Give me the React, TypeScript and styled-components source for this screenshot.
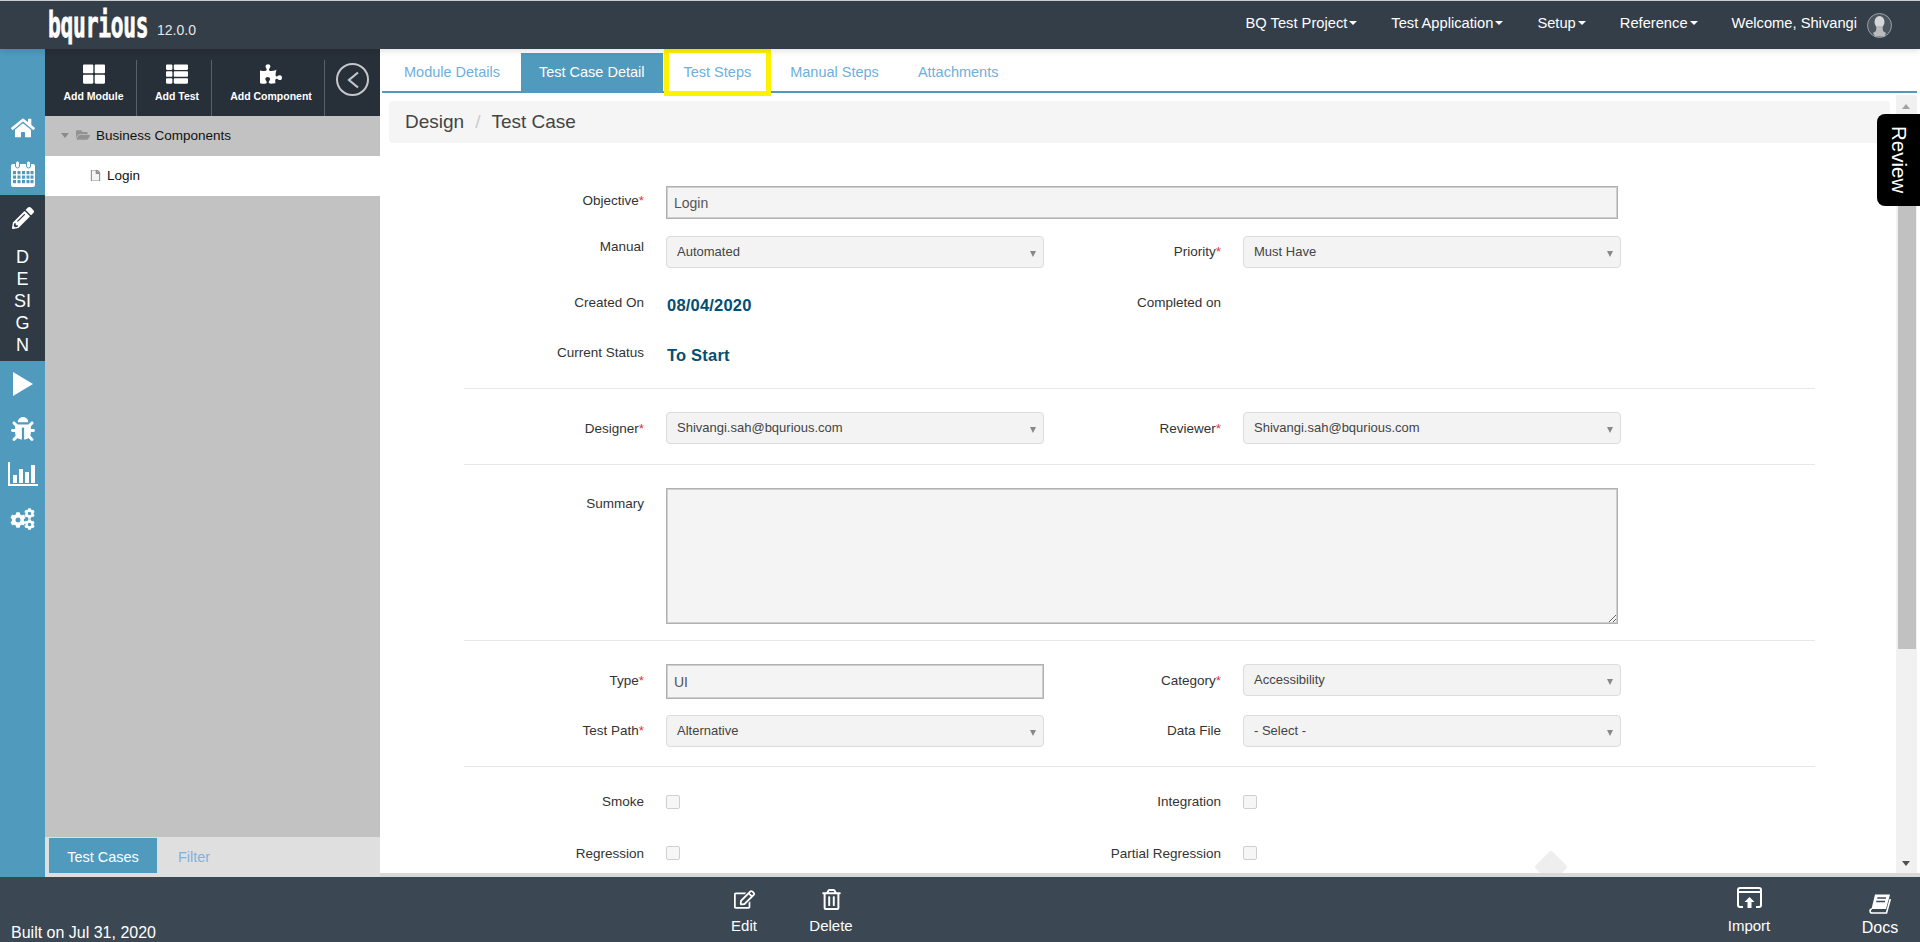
import React from 'react';
import styled, { createGlobalStyle } from 'styled-components';
import {
  FaHome,
  FaPencilAlt,
  FaBug,
  FaCog,
  FaThLarge,
  FaThList,
  FaPuzzlePiece,
  FaFolderOpen,
  FaFile,
  FaRegEdit,
  FaRegTrashAlt,
} from 'react-icons/fa';

const GlobalStyle = createGlobalStyle`
  html, body {
    margin: 0;
    padding: 0;
    background: #fff;
    font-family: "Liberation Sans", Arial, sans-serif;
    color: #333;
  }
  * { box-sizing: border-box; }
`;

const Page = styled.div`
  width: 1920px;
  height: 942px;
  display: flex;
  flex-direction: column;
  overflow: hidden;
`;

const Header = styled.header`
  height: 49px;
  flex-shrink: 0;
  border-top: 1px solid #c9cdd0;
  background: #343e49;
  display: flex;
  align-items: center;
  padding-left: 48px;
  color: #fff;
  font-size: 14.7px;
  position: relative;
  z-index: 2;
  box-shadow: 0 2px 6px rgba(0, 0, 0, 0.12);
`;

const Logo = styled.div`
  width: 100px;
  font-family: "DejaVu Sans Mono", monospace;
  font-weight: 700;
  font-size: 36px;
  line-height: 30px;
  letter-spacing: -0.4px;
  white-space: nowrap;
  -webkit-text-stroke: 0.8px #fff;
  transform: scaleX(0.59);
  transform-origin: left center;
`;

const Version = styled.span`
  margin-left: 9px;
  margin-top: 10px;
  font-size: 14px;
  color: #e4e6e8;
`;

const NavList = styled.nav`
  margin-left: auto;
  display: flex;
  align-items: center;
  gap: 34px;
  padding-right: 28px;
`;

const NavItem = styled.span`
  display: flex;
  align-items: center;
  white-space: nowrap;
  margin-top: -4px;
`;

const Caret = styled.i`
  margin-left: 2px;
  width: 0;
  height: 0;
  border-left: 4.5px solid transparent;
  border-right: 4.5px solid transparent;
  border-top: 4.5px solid #fff;
`;

const Avatar = styled.svg`
  width: 25px;
  height: 25px;
  margin-left: -24px;
`;

const Body = styled.div`
  flex: 1;
  display: flex;
  min-height: 0;
`;

const Rail = styled.aside`
  width: 45px;
  flex-shrink: 0;
  background: #4f9abd;
  padding-top: 56px;
  color: #fff;
`;

const RailItem = styled.div<{ $h?: number }>`
  height: ${(p) => p.$h ?? 46}px;
  display: flex;
  align-items: center;
  justify-content: center;
  font-size: 24px;
`;

const RailActive = styled.div`
  height: 166px;
  margin-top: -1px;
  background: #2f3a44;
  display: flex;
  flex-direction: column;
  align-items: center;
  padding-top: 12px;
  font-size: 22px;
`;

const RailWord = styled.div`
  margin-top: 17px;
  font-size: 18px;
  line-height: 22px;
  text-align: center;
  width: 20px;
  word-break: break-all;
`;

const SidePanel = styled.section`
  width: 335px;
  flex-shrink: 0;
  background: #c1c2c1;
  display: flex;
  flex-direction: column;
`;

const Toolbar = styled.div`
  height: 67px;
  background: #272f39;
  display: flex;
  padding-top: 11px;
  color: #fff;
`;

const ToolButton = styled.div<{ $w: number }>`
  width: ${(p) => p.$w}px;
  border-right: 1px solid #59606a;
  display: flex;
  flex-direction: column;
  align-items: center;
  font-size: 10.5px;
  font-weight: 700;
  padding: 3px 0 0 6px;
  white-space: nowrap;
`;

const ToolLabel = styled.span`
  margin-top: 5px;
  line-height: 13px;
`;

const Collapse = styled.div`
  width: 33px;
  height: 33px;
  margin: 3px 0 0 11px;
  border: 2px solid #c5c7c9;
  border-radius: 50%;
  display: flex;
  align-items: center;
  justify-content: center;
`;

const TreeRow = styled.div<{ $selected?: boolean }>`
  height: 40px;
  display: flex;
  align-items: center;
  padding-bottom: 2px;
  font-size: 13.5px;
  color: #111;
  background: ${(p) => (p.$selected ? '#fff' : 'transparent')};
  padding-left: ${(p) => (p.$selected ? 45 : 16)}px;
`;

const TreeCaret = styled.i`
  width: 0;
  height: 0;
  border-left: 4px solid transparent;
  border-right: 4px solid transparent;
  border-top: 5px solid #8a8a8a;
  margin-right: 7px;
`;

const FolderIcon = styled(FaFolderOpen)`
  color: #929292;
  font-size: 14px;
  margin-right: 6px;
`;

const FileIcon = styled(FaFile)`
  color: #f4f4f4;
  font-size: 11px;
  margin-right: 6px;
  stroke: #8d8d8d;
  stroke-width: 50px;
`;

const PanelFill = styled.div`
  flex: 1;
`;

const PanelTabs = styled.div`
  height: 40px;
  background: #dfdfdf;
  padding: 1px 0 4px 4px;
  display: flex;
  font-size: 14.5px;
`;

const PanelTab = styled.div<{ $active?: boolean }>`
  width: ${(p) => (p.$active ? 108 : 74)}px;
  display: flex;
  align-items: center;
  justify-content: center;
  padding-top: 2px;
  background: ${(p) => (p.$active ? '#4f9abd' : 'transparent')};
  color: ${(p) => (p.$active ? '#fff' : '#7fb2de')};
`;

const Main = styled.main`
  flex: 1;
  min-width: 0;
  display: flex;
  flex-direction: column;
  position: relative;
`;

const Tabs = styled.div`
  height: 44px;
  flex-shrink: 0;
  margin: 0 3px 0 2px;
  padding: 4px 0 0 4px;
  display: flex;
  border-bottom: 2px solid #4f9abd;
  font-size: 14.5px;
`;

const Tab = styled.div<{ $active?: boolean; $marked?: boolean }>`
  position: relative;
  padding: 0 18px;
  margin-right: 3px;
  height: 38px;
  display: flex;
  align-items: center;
  white-space: nowrap;
  background: ${(p) => (p.$active ? '#4f9abd' : 'transparent')};
  color: ${(p) => (p.$active ? '#fff' : '#70aedd')};

  ${(p) =>
    p.$marked &&
    `&::after {
      content: '';
      position: absolute;
      inset: -5px -2px -5px -2px;
      border: 5px solid #fff200;
    }`}
`;

const ScrollRow = styled.div`
  flex: 1;
  min-height: 0;
  display: flex;
  margin-top: 2px;
  padding-right: 3px;
`;

const Content = styled.div`
  flex: 1;
  min-width: 0;
  overflow: hidden;
  position: relative;
`;

const Breadcrumb = styled.div`
  height: 42px;
  margin: 6px 6px 0 9px;
  padding-left: 16px;
  background: #f5f5f5;
  border-radius: 4px;
  display: flex;
  align-items: center;
  font-size: 19px;
  color: #444;
`;

const CrumbSlash = styled.span`
  color: #ccc;
  margin: 0 11px;
`;

const Form = styled.div`
  margin: 43px 0 0 84px;
  width: 1351px;
`;

const Row = styled.div<{ $h: number; $top?: number }>`
  height: ${(p) => p.$h}px;
  margin-top: ${(p) => p.$top ?? 0}px;
  display: grid;
  grid-template-columns: 202px 378px 199px 378px;
  align-items: start;
`;

const Label = styled.label<{ $top?: number }>`
  display: block;
  padding: ${(p) => p.$top ?? 8}px 22px 0 0;
  text-align: right;
  font-size: 13.5px;
  line-height: 18px;
  color: #333;
`;

const Required = styled.span`
  color: #e0323c;
`;

const TextBox = styled.input<{ $wide?: boolean; $h?: number }>`
  grid-column: ${(p) => (p.$wide ? '2 / 5' : 'auto')};
  width: ${(p) => (p.$wide ? '952px' : '100%')};
  height: ${(p) => p.$h ?? 33}px;
  border: 1px solid #b0b0b0;
  box-shadow: inset 0 0 0 1px #cfcfcf;
  background: #f4f4f4;
  padding: 0 7px;
  font: 14px "Liberation Sans", Arial, sans-serif;
  color: #555;
  outline: none;
`;

const SummaryBox = styled.textarea`
  grid-column: 2 / 5;
  display: block;
  width: 952px;
  height: 136px;
  margin-top: 1px;
  border: 1px solid #b0b0b0;
  box-shadow: inset 0 0 0 1px #cfcfcf;
  background: #f4f4f4;
  outline: none;
`;

const SelectBox = styled.div`
  position: relative;
  height: 32px;
  border: 1px solid #dcdcdc;
  border-radius: 4px;
  background: #f3f3f3;
  padding: 0 0 1px 10px;
  display: flex;
  align-items: center;
  font-size: 13px;
  color: #444;

  &::after {
    content: '';
    position: absolute;
    right: 7px;
    top: 14px;
    border-left: 3.5px solid transparent;
    border-right: 3.5px solid transparent;
    border-top: 6px solid #888;
  }
`;

const Strong = styled.div<{ $top: number }>`
  padding: ${(p) => p.$top}px 0 0 1px;
  font-size: 16.5px;
  line-height: 18px;
  letter-spacing: 0.2px;
  font-weight: 700;
  color: #024f75;
`;

const Divider = styled.hr`
  margin: 0;
  border: 0;
  border-top: 1px solid #e7e7e7;
`;

const Check = styled.span`
  display: block;
  width: 14px;
  height: 14px;
  margin-top: 2px;
  border: 1px solid #cfcfcf;
  border-radius: 2px;
  background: #f6f6f6;
`;

const Diamond = styled.div`
  position: absolute;
  left: 1159px;
  bottom: -6px;
  width: 24px;
  height: 24px;
  border-radius: 3px;
  background: #eee;
  transform: rotate(45deg);
`;

const ScrollTrack = styled.div`
  width: 21px;
  flex-shrink: 0;
  background: #f1f1f1;
  padding: 23px 1px 0 2px;
  position: relative;
`;

const ScrollThumb = styled.div`
  height: 531px;
  background: #c1c1c1;
`;

const ScrollArrow = styled.i<{ $down?: boolean }>`
  position: absolute;
  left: 6px;
  ${(p) => (p.$down ? 'bottom: 7px;' : 'top: 9px;')}
  border-left: 4.5px solid transparent;
  border-right: 4.5px solid transparent;
  ${(p) => (p.$down ? 'border-top: 5px solid #505050;' : 'border-bottom: 5px solid #a3a3a3;')}
`;

const ReviewTab = styled.div`
  position: absolute;
  right: 0;
  top: 65px;
  z-index: 3;
  width: 43px;
  height: 92px;
  border-radius: 8px 0 0 8px;
  background: #000;
  color: #fff;
  writing-mode: vertical-rl;
  display: flex;
  align-items: center;
  justify-content: center;
  font-size: 20.5px;
`;

const BottomStrip = styled.div`
  height: 4px;
  flex-shrink: 0;
  background: #d8d8d8;
`;

const Footer = styled.footer`
  height: 65px;
  flex-shrink: 0;
  background: #3b4854;
  color: #fff;
  display: flex;
  align-items: flex-start;
  padding: 0 8px 0 11px;
  font-size: 15px;
  overflow: hidden;
`;

const BuiltOn = styled.div`
  width: 701px;
  padding-top: 47px;
  font-size: 16px;
  line-height: 18px;
  white-space: nowrap;
`;

const FooterAction = styled.div<{ $gap?: number; $top?: number; $big?: boolean }>`
  width: 64px;
  margin-left: ${(p) => p.$gap ?? 0}px;
  padding-top: ${(p) => p.$top ?? 12}px;
  display: flex;
  flex-direction: column;
  align-items: center;
  font-size: ${(p) => (p.$big ? 16 : 15)}px;
  line-height: 18px;
  white-space: nowrap;
`;

const FooterIcon = styled.div<{ $h?: number; $gap?: number }>`
  height: ${(p) => p.$h ?? 21}px;
  margin-bottom: ${(p) => p.$gap ?? 7}px;
  font-size: 21px;
  display: flex;
  align-items: center;
`;

const FooterRight = styled.div`
  margin-left: auto;
  display: flex;
  gap: 67px;
`;

const PlayIcon = () => (
  <svg width="20" height="24" viewBox="0 0 20 24" fill="#fff">
    <polygon points="0,0 20,12 0,24" />
  </svg>
);

const CogsIcon = () => (
  <svg width="26" height="22" viewBox="0 0 26 22" fill="#fff">
    <FaCog x={0} y={4} size={16} />
    <FaCog x={14} y={0} size={11} />
    <FaCog x={14} y={11} size={11} />
  </svg>
);

const CalendarIcon = () => (
  <svg width="24" height="26" viewBox="0 0 24 26" fill="#fff">
    <rect x="0" y="3" width="24" height="23" rx="2" />
    <rect x="4.5" y="0" width="4" height="7" rx="2" stroke="#4f9abd" />
    <rect x="15.5" y="0" width="4" height="7" rx="2" stroke="#4f9abd" />
    {[10, 14.5, 19].map((y) =>
      [2, 6.5, 11, 15.5, 19.5].map((x) => <rect key={`${x}-${y}`} x={x} y={y} width="3" height="3.2" fill="#4f9abd" />)
    )}
  </svg>
);

const ChartIcon = () => (
  <svg width="30" height="24" viewBox="0 0 30 24" fill="#fff">
    <rect x="0" y="0" width="2" height="24" />
    <rect x="0" y="22" width="30" height="2" />
    <rect x="5" y="13" width="4" height="8" />
    <rect x="11" y="7" width="4" height="14" />
    <rect x="17" y="10" width="4" height="11" />
    <rect x="23" y="3" width="4" height="18" />
  </svg>
);

const ChevronIcon = () => (
  <svg width="14" height="18" viewBox="0 0 14 18" fill="none" stroke="#c5c7c9" strokeWidth="2.2">
    <polyline points="12,1.5 3,9 12,16.5" />
  </svg>
);

const ImportIcon = () => (
  <svg width="25" height="21" viewBox="0 0 25 21" fill="none" stroke="#fff" strokeWidth="2">
    <path d="M6 20H3a2 2 0 0 1-2-2V3a2 2 0 0 1 2-2h19a2 2 0 0 1 2 2v15a2 2 0 0 1-2 2h-3" />
    <path d="M1 5h23" />
    <path d="M12.5 10l5 5h-3v6h-4v-6h-3z" fill="#fff" stroke="none" />
  </svg>
);

const BookIcon = () => (
  <svg width="22" height="20" viewBox="0 0 22 20" fill="#fff">
    <path d="M6 .5H21L17 15H2.5z" />
    <path d="M3 15C.5 15 .3 19 3 19H17.5L21.3 5" fill="none" stroke="#fff" strokeWidth="1.6" />
    <path d="M8.3 4H17M7.3 7.5H16" stroke="#3b4854" strokeWidth="1.6" />
  </svg>
);

const AvatarIcon = () => (
  <Avatar viewBox="0 0 25 25">
    <circle cx="12.5" cy="12.5" r="12" fill="#4b555e" stroke="#9aa0a5" />
    <ellipse cx="12.5" cy="9" rx="5" ry="6" fill="#d4d6d7" />
    <path d="M9.5 13h6l.5 5 3 2-1.5 3.5H8L6 20l3-2z" fill="#b9bcbe" />
  </Avatar>
);

const Req = ({ children }: { children: string }) => (
  <>
    {children}
    <Required>*</Required>
  </>
);

const navItems = ['BQ Test Project', 'Test Application', 'Setup', 'Reference'];
const tabs = ['Module Details', 'Test Case Detail', 'Test Steps', 'Manual Steps', 'Attachments'];

const App = () => {
  return (
    <Page>
      <GlobalStyle />
      <Header>
        <Logo>bqurious</Logo>
        <Version>12.0.0</Version>
        <NavList>
          {navItems.map((item) => (
            <NavItem key={item}>
              {item}
              <Caret />
            </NavItem>
          ))}
          <NavItem>Welcome, Shivangi</NavItem>
          <AvatarIcon />
        </NavList>
      </Header>
      <Body>
        <Rail>
          <RailItem><FaHome /></RailItem>
          <RailItem $h={45}><CalendarIcon /></RailItem>
          <RailActive>
            <FaPencilAlt />
            <RailWord>DESIGN</RailWord>
          </RailActive>
          <RailItem $h={45}><PlayIcon /></RailItem>
          <RailItem><FaBug /></RailItem>
          <RailItem $h={44}><ChartIcon /></RailItem>
          <RailItem><CogsIcon /></RailItem>
        </Rail>
        <SidePanel>
          <Toolbar>
            <ToolButton $w={92}>
              <FaThLarge size={22} />
              <ToolLabel>Add Module</ToolLabel>
            </ToolButton>
            <ToolButton $w={75}>
              <FaThList size={22} />
              <ToolLabel>Add Test</ToolLabel>
            </ToolButton>
            <ToolButton $w={113}>
              <FaPuzzlePiece size={22} />
              <ToolLabel>Add Component</ToolLabel>
            </ToolButton>
            <Collapse><ChevronIcon /></Collapse>
          </Toolbar>
          <TreeRow>
            <TreeCaret />
            <FolderIcon />
            Business Components
          </TreeRow>
          <TreeRow $selected>
            <FileIcon />
            Login
          </TreeRow>
          <PanelFill />
          <PanelTabs>
            <PanelTab $active>Test Cases</PanelTab>
            <PanelTab>Filter</PanelTab>
          </PanelTabs>
        </SidePanel>
        <Main>
          <Tabs>
            {tabs.map((tab) => (
              <Tab key={tab} $active={tab === 'Test Case Detail'} $marked={tab === 'Test Steps'}>
                {tab}
              </Tab>
            ))}
          </Tabs>
          <ScrollRow>
            <Content>
              <Breadcrumb>
                Design
                <CrumbSlash>/</CrumbSlash>
                Test Case
              </Breadcrumb>
              <Form>
                <Row $h={50}>
                  <Label $top={6}><Req>Objective</Req></Label>
                  <TextBox $wide readOnly value="Login" />
                </Row>
                <Row $h={52}>
                  <Label $top={2}>Manual</Label>
                  <SelectBox>Automated</SelectBox>
                  <Label $top={7}><Req>Priority</Req></Label>
                  <SelectBox>Must Have</SelectBox>
                </Row>
                <Row $h={45}>
                  <Label $top={6}>Created On</Label>
                  <Strong $top={8}>08/04/2020</Strong>
                  <Label $top={6}>Completed on</Label>
                </Row>
                <Row $h={55}>
                  <Label $top={11}>Current Status</Label>
                  <Strong $top={13}>To Start</Strong>
                </Row>
                <Divider />
                <Row $h={52} $top={23}>
                  <Label><Req>Designer</Req></Label>
                  <SelectBox>Shivangi.sah@bqurious.com</SelectBox>
                  <Label><Req>Reviewer</Req></Label>
                  <SelectBox>Shivangi.sah@bqurious.com</SelectBox>
                </Row>
                <Divider />
                <Row $h={153} $top={22}>
                  <Label>Summary</Label>
                  <SummaryBox readOnly />
                </Row>
                <Divider />
                <Row $h={51} $top={23}>
                  <Label><Req>Type</Req></Label>
                  <TextBox readOnly value="UI" $h={35} />
                  <Label><Req>Category</Req></Label>
                  <SelectBox>Accessibility</SelectBox>
                </Row>
                <Row $h={51}>
                  <Label $top={7}><Req>Test Path</Req></Label>
                  <SelectBox>Alternative</SelectBox>
                  <Label $top={7}>Data File</Label>
                  <SelectBox>- Select -</SelectBox>
                </Row>
                <Divider />
                <Row $h={51} $top={26}>
                  <Label $top={0}>Smoke</Label>
                  <Check />
                  <Label $top={0}>Integration</Label>
                  <Check />
                </Row>
                <Row $h={51}>
                  <Label $top={1}>Regression</Label>
                  <Check />
                  <Label $top={1}>Partial Regression</Label>
                  <Check />
                </Row>
              </Form>
              <Diamond />
            </Content>
            <ScrollTrack>
              <ScrollArrow />
              <ScrollThumb />
              <ScrollArrow $down />
            </ScrollTrack>
          </ScrollRow>
          <BottomStrip />
          <ReviewTab>Review</ReviewTab>
        </Main>
      </Body>
      <Footer>
        <BuiltOn>Built on Jul 31, 2020</BuiltOn>
        <FooterAction>
          <FooterIcon><FaRegEdit /></FooterIcon>
          Edit
        </FooterAction>
        <FooterAction $gap={23}>
          <FooterIcon><FaRegTrashAlt /></FooterIcon>
          Delete
        </FooterAction>
        <FooterRight>
          <FooterAction $top={10}>
            <FooterIcon $gap={9}><ImportIcon /></FooterIcon>
            Import
          </FooterAction>
          <FooterAction $top={17} $big>
            <FooterIcon $h={20} $gap={5}><BookIcon /></FooterIcon>
            Docs
          </FooterAction>
        </FooterRight>
      </Footer>
    </Page>
  );
};

export default App;
